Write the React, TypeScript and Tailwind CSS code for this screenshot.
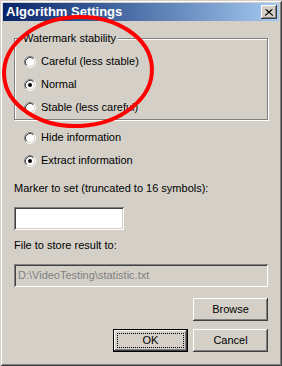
import React from 'react';

function RadioDot({ checked }: { checked?: boolean }) {
  return (
    <svg width="12" height="12" viewBox="0 0 12 12" className="shrink-0">
      <circle cx="6" cy="6" r="5" fill="#fff" />
      <path d="M2.11 9.89 A5.5 5.5 0 0 1 9.89 2.11" fill="none" stroke="#808080" strokeWidth="1" />
      <path d="M9.89 2.11 A5.5 5.5 0 0 1 2.11 9.89" fill="none" stroke="#fff" strokeWidth="1" />
      <path d="M2.82 9.18 A4.5 4.5 0 0 1 9.18 2.82" fill="none" stroke="#404040" strokeWidth="1" />
      <path d="M9.18 2.82 A4.5 4.5 0 0 1 2.82 9.18" fill="none" stroke="#d4d0c8" strokeWidth="1" />
      {checked && <circle cx="6" cy="6" r="2" fill="#000" />}
    </svg>
  );
}

function Radio({ label, checked, indent }: { label: string; checked?: boolean; indent: string }) {
  return (
    <div className={`flex items-center h-[13px] gap-[5px] ${indent}`}>
      <RadioDot checked={checked} />
      <span className="leading-[13px]">{label}</span>
    </div>
  );
}

const raised =
  'shadow-[inset_-1px_-1px_#404040,inset_1px_1px_#fff,inset_-2px_-2px_#808080,inset_2px_2px_#d4d0c8]';
const sunken =
  'shadow-[inset_1px_1px_#808080,inset_-1px_-1px_#fff,inset_2px_2px_#404040,inset_-2px_-2px_#d4d0c8]';

export default function App() {
  return (
    <div className="relative w-[282px] h-[366px] bg-[#d4d0c8] pt-[3px] text-[11px] text-black font-['Liberation_Sans',Arial,sans-serif] shadow-[inset_1px_1px_#d4d0c8,inset_-1px_-1px_#404040,inset_2px_2px_#fff,inset_-2px_-2px_#808080] overflow-hidden">
      {/* Title bar */}
      <div className="mx-[3px] h-[18px] bg-gradient-to-r from-[#0a246a] to-[#a6caf0] flex items-center justify-between pl-[3px] pr-[2px]">
        <span className="text-white font-bold text-[13px] leading-[18px]">Algorithm Settings</span>
        <div className={`w-[16px] h-[14px] bg-[#d4d0c8] flex items-center justify-center ${raised}`}>
          <svg width="8" height="7" viewBox="0 0 8 7">
            <path d="M0.5 0.5 L7.5 6.5 M1.5 0.5 L8 6.5 M7.5 0.5 L0.5 6.5 M6.5 0.5 L0 6.5" stroke="#000" strokeWidth="1" fill="none" />
          </svg>
        </div>
      </div>

      <div className="flex flex-col px-[14px]">
        {/* Group box */}
        <div className="relative mt-[17px] h-[82px] border border-[#808080] shadow-[inset_1px_1px_#fff,1px_1px_#fff] pt-[16px] flex flex-col gap-[10px]">
          <span className="absolute -top-[7px] left-[6px] px-[2px] bg-[#d4d0c8] leading-[13px]">Watermark stability</span>
          <Radio label="Careful (less stable)" indent="pl-[9px]" />
          <Radio label="Normal" checked indent="pl-[9px]" />
          <Radio label="Stable (less careful)" indent="pl-[9px]" />
        </div>

        <div className="mt-[11px]">
          <Radio label="Hide information" indent="pl-[10px]" />
        </div>
        <div className="mt-[10px]">
          <Radio label="Extract information" checked indent="pl-[10px]" />
        </div>

        <div className="mt-[15px] h-[13px] leading-[13px]">Marker to set (truncated to 16 symbols):</div>
        <div className={`mt-[12px] w-[110px] h-[23px] bg-white ${sunken}`} />

        <div className="mt-[9px] h-[13px] leading-[13px]">File to store result to:</div>
        <div className={`mt-[12px] h-[23px] bg-[#d4d0c8] flex items-center pl-[4px] text-[#808080] ${sunken}`}>
          D:\VideoTesting\statistic.txt
        </div>

        <div className="mt-[11px] flex justify-end">
          <button className={`w-[75px] h-[23px] bg-[#d4d0c8] ${raised}`}>Browse</button>
        </div>
        <div className="mt-[8px] flex justify-end gap-[5px]">
          <button className={`w-[75px] h-[23px] bg-[#d4d0c8] border border-black p-[3px] ${raised}`}>
            <div className="w-full h-full border border-dotted border-black flex items-center justify-center">OK</div>
          </button>
          <button className={`w-[75px] h-[23px] bg-[#d4d0c8] ${raised}`}>Cancel</button>
        </div>
      </div>

      {/* Red highlight ellipse */}
      <svg className="absolute inset-0 pointer-events-none" width="282" height="366">
        <ellipse cx="78" cy="71.5" rx="74" ry="54.5" fill="none" stroke="#ff0000" strokeWidth="4" transform="rotate(-3 78 71.5)" />
      </svg>
    </div>
  );
}
